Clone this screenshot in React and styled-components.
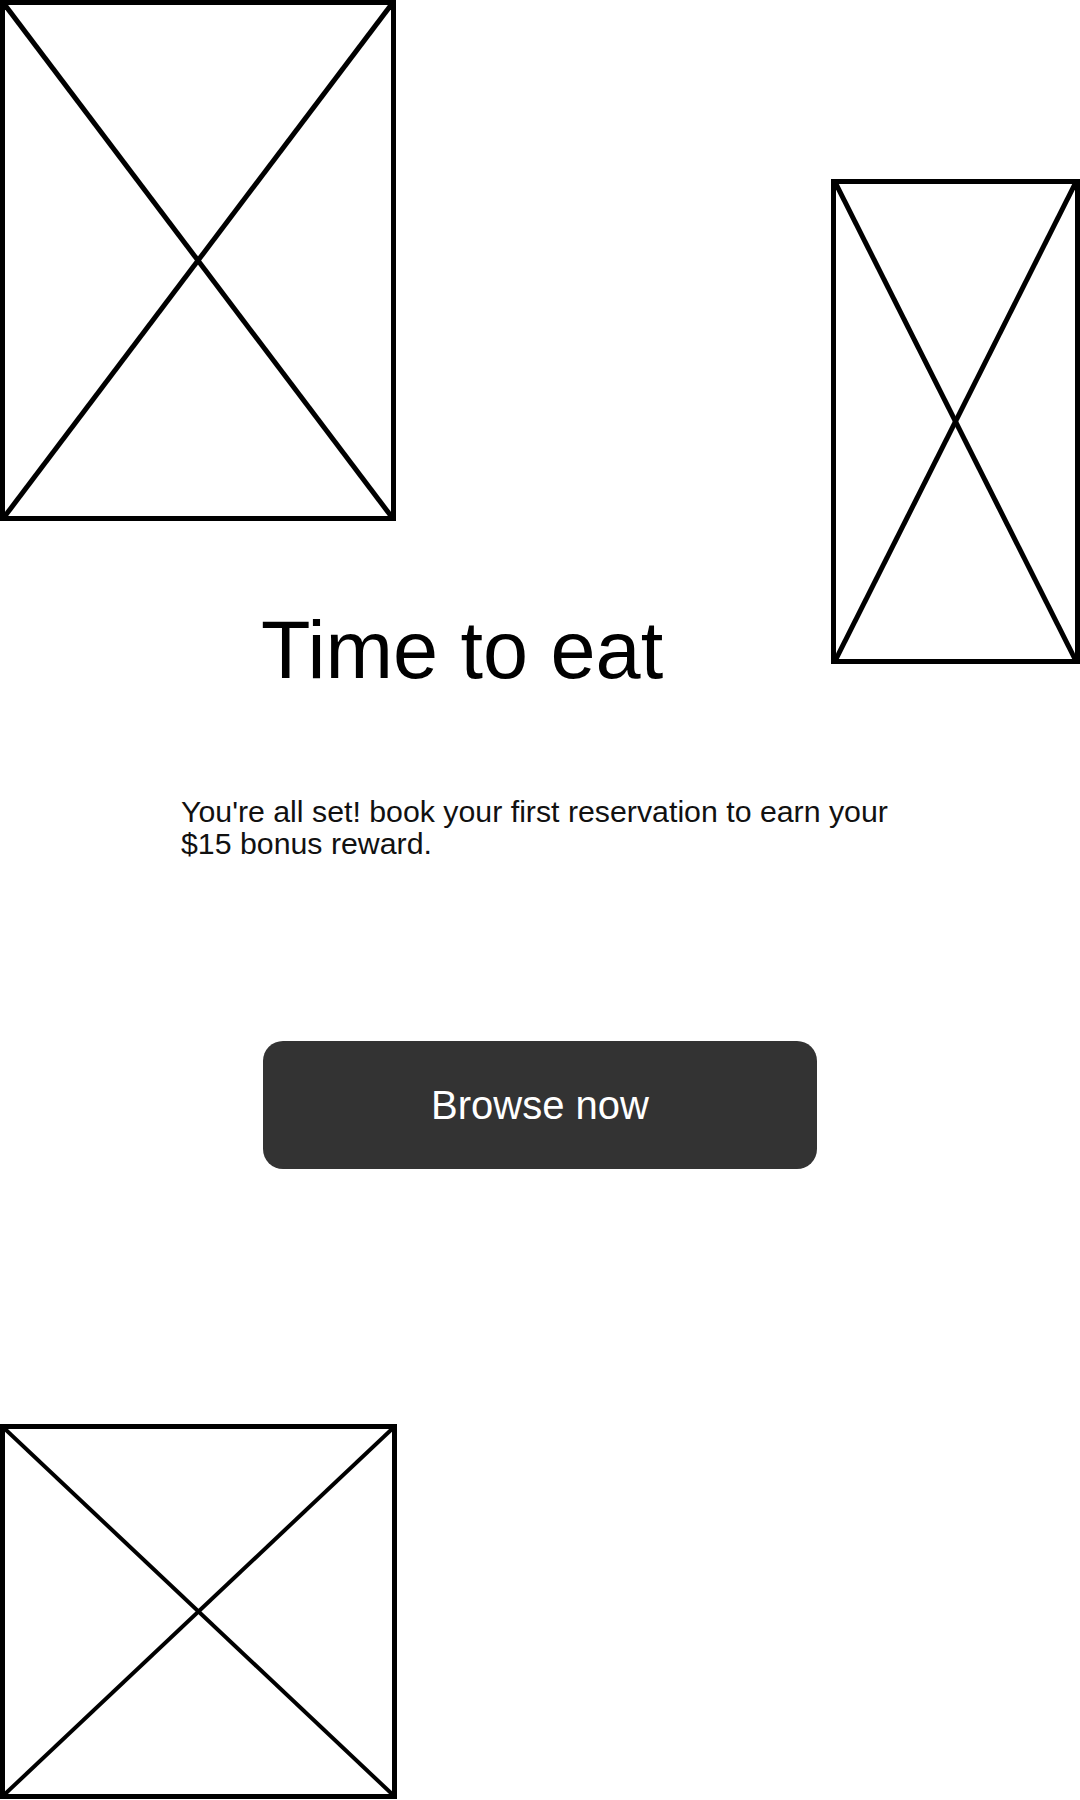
import React from 'react';
import styled, { createGlobalStyle } from 'styled-components';

const Placeholder = ({ width, height, cross = 5, ...rest }) => (
  <Frame $width={width} $height={height} {...rest}>
    <svg width="100%" height="100%" viewBox="0 0 100 100" preserveAspectRatio="none">
      <line x1="0" y1="0" x2="100" y2="100" stroke="#000" strokeWidth={cross} vectorEffect="non-scaling-stroke" />
      <line x1="100" y1="0" x2="0" y2="100" stroke="#000" strokeWidth={cross} vectorEffect="non-scaling-stroke" />
    </svg>
  </Frame>
);

const App = () => {
  return (
    <>
      <GlobalStyle />
      <Page>
        <Hero>
          <LeftColumn>
            <Placeholder width={396} height={521} />
            <Title>Time to eat</Title>
          </LeftColumn>
          <SidePlaceholder width={249} height={485} />
        </Hero>
        <Message>
          You're all set! book your first reservation to earn your
          <br />
          $15 bonus reward.
        </Message>
        <BrowseButton type="button">Browse now</BrowseButton>
        <BottomPlaceholder width={397} height={375} cross={4} />
      </Page>
    </>
  );
};

export default App;

const GlobalStyle = createGlobalStyle`
  html, body {
    margin: 0;
    padding: 0;
    background: #ffffff;
  }
  body {
    font-family: "Liberation Sans", Arial, sans-serif;
    color: #000;
  }
`;

const Page = styled.div`
  width: 1080px;
  display: flex;
  flex-direction: column;
`;

const Hero = styled.div`
  display: flex;
  align-items: flex-start;
`;

const LeftColumn = styled.div`
  flex: 1;
  display: flex;
  flex-direction: column;
`;

const Frame = styled.div`
  box-sizing: border-box;
  width: ${(p) => p.$width}px;
  height: ${(p) => p.$height}px;
  border: 5px solid #000;
  flex-shrink: 0;

  svg {
    display: block;
  }
`;

const SidePlaceholder = styled(Placeholder)`
  margin-top: 179px;
`;

const BottomPlaceholder = styled(Placeholder)`
  margin-top: 255px;
`;

const Title = styled.h1`
  margin: 83px 0 0;
  padding-left: 261px;
  font-size: 81px;
  font-weight: 400;
  line-height: 92px;
  color: #000;
`;

const Message = styled.p`
  margin: 100px 0 0;
  padding-left: 181px;
  font-size: 30.3px;
  line-height: 32px;
  color: #111;
`;

const BrowseButton = styled.button`
  margin: 181px 0 0 263px;
  width: 554px;
  height: 128px;
  border: none;
  border-radius: 20px;
  background: #333333;
  color: #ffffff;
  font-family: "Liberation Sans", Arial, sans-serif;
  font-size: 40px;
  cursor: pointer;
`;
